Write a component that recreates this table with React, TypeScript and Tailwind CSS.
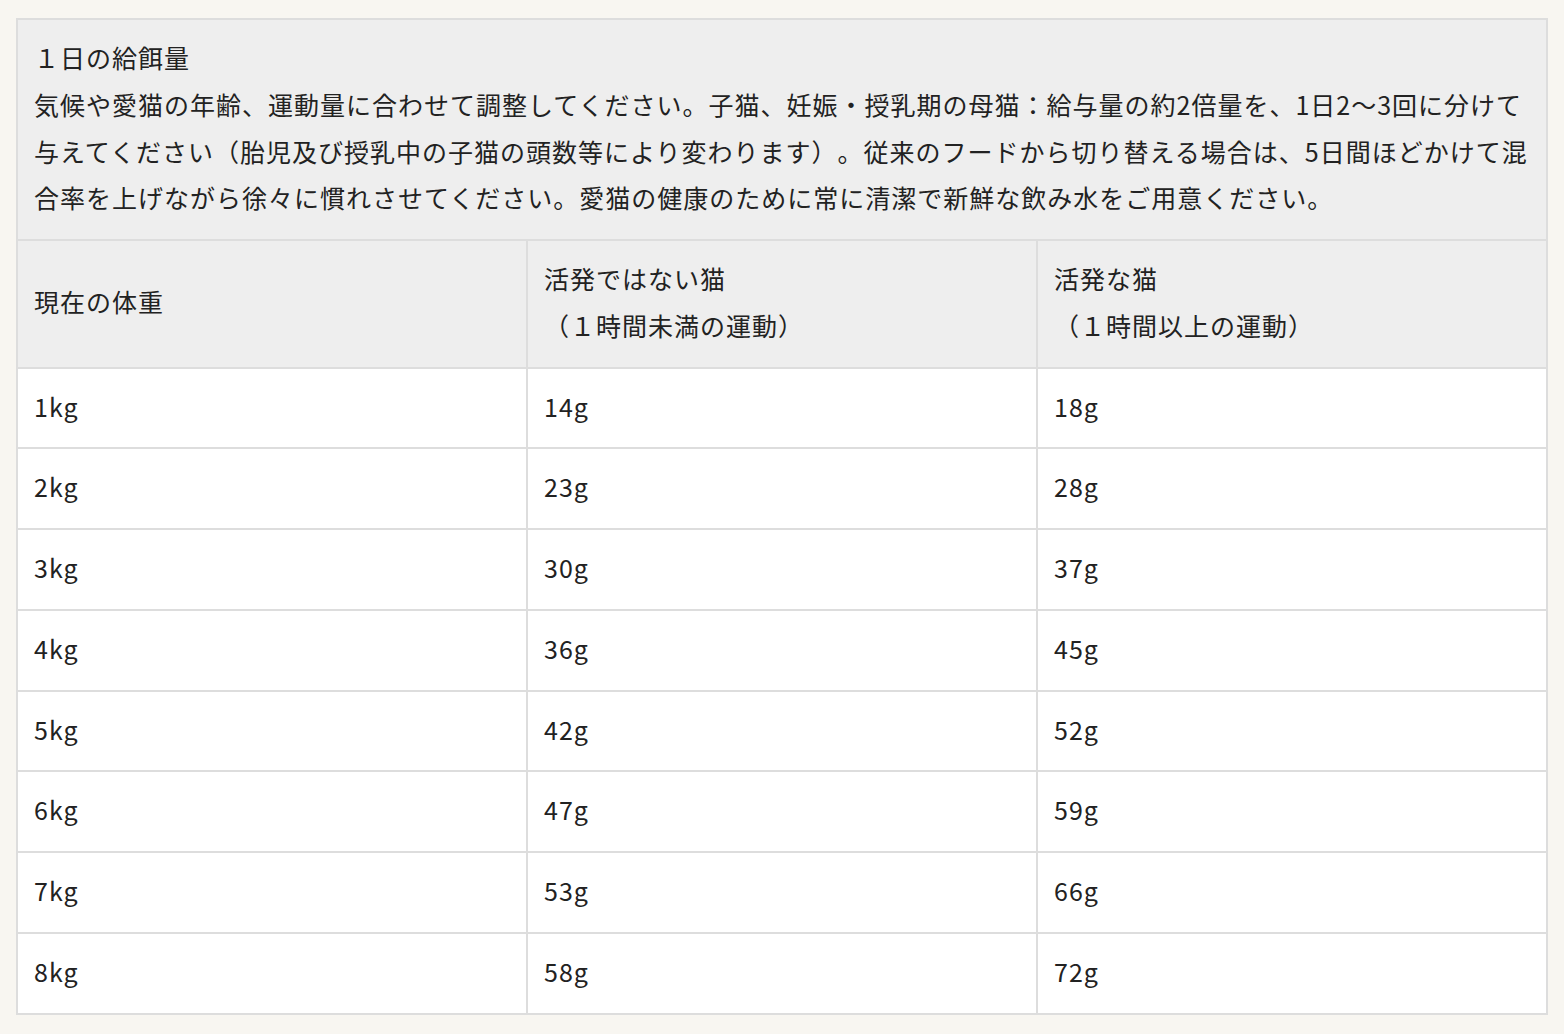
const rows: [string, string, string][] = [
  ['1kg', '14g', '18g'],
  ['2kg', '23g', '28g'],
  ['3kg', '30g', '37g'],
  ['4kg', '36g', '45g'],
  ['5kg', '42g', '52g'],
  ['6kg', '47g', '59g'],
  ['7kg', '53g', '66g'],
  ['8kg', '58g', '72g'],
];

const captionLines = [
  '気候や愛猫の年齢、運動量に合わせて調整してください。子猫、妊娠・授乳期の母猫：給与量の約2倍量を、1日2〜3回に分けて',
  '与えてください（胎児及び授乳中の子猫の頭数等により変わります）。従来のフードから切り替える場合は、5日間ほどかけて混',
  '合率を上げながら徐々に慣れさせてください。愛猫の健康のために常に清潔で新鮮な飲み水をご用意ください。',
];

const cell = 'border-2 border-[#dddddd] px-4 pt-[14px] pb-[18px] text-left align-middle font-normal';

export default function App() {
  return (
    <div
      className="min-h-screen bg-[#f8f6f1] pl-4 pr-4 pt-[18px] pb-5 text-[#222222] text-[25px] leading-[46.75px] tracking-[1px] [text-spacing-trim:space-all]"
      style={{ fontFamily: '"Noto Sans CJK JP", "Noto Sans", sans-serif' }}
    >
      <table className="w-[1530px] border-collapse table-fixed">
        <colgroup>
          <col className="w-[510px]" />
          <col className="w-[510px]" />
          <col className="w-[510px]" />
        </colgroup>
        <thead>
          <tr className="bg-[#eeeeee]">
            <th colSpan={3} className={cell}>
              <div>１日の給餌量</div>
              {captionLines.map((l) => (
                <div key={l} className="whitespace-nowrap">
                  {l}
                </div>
              ))}
            </th>
          </tr>
          <tr className="bg-[#eeeeee]">
            <th className={cell}>現在の体重</th>
            <th className={cell}>
              活発ではない猫
              <br />
              （１時間未満の運動）
            </th>
            <th className={cell}>
              活発な猫
              <br />
              （１時間以上の運動）
            </th>
          </tr>
        </thead>
        <tbody>
          {rows.map((r) => (
            <tr key={r[0]} className="bg-white">
              <td className={cell}>{r[0]}</td>
              <td className={cell}>{r[1]}</td>
              <td className={cell}>{r[2]}</td>
            </tr>
          ))}
        </tbody>
      </table>
    </div>
  );
}
